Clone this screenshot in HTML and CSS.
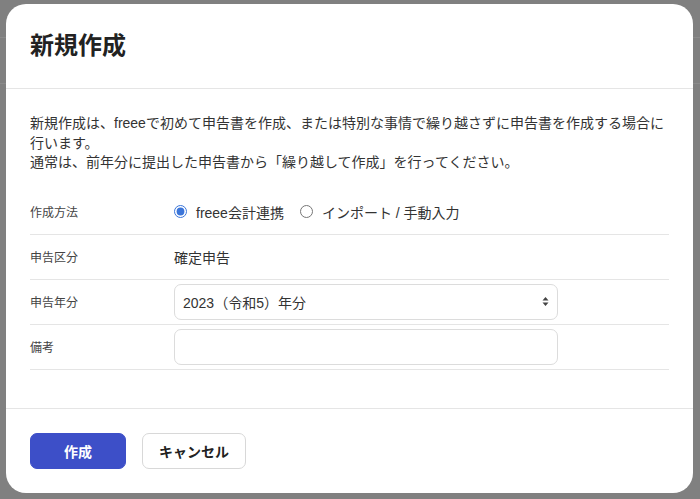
FILE: index.html
```html
<!DOCTYPE html>
<html lang="ja">

<head>
    <meta charset="UTF-8">
    <meta name="viewport" content="width=device-width, initial-scale=1.0">
    <title>新規作成</title>
    <link rel="stylesheet" href="styles.css">
</head>

<body>
    <div class="overlay">
        <div class="modal">
            <div class="modal-header">
                <h1>新規作成</h1>
            </div>
            <div class="modal-body">
                <p class="lead">新規作成は、freeeで初めて申告書を作成、または特別な事情で繰り越さずに申告書を作成する場合に行います。<br>通常は、前年分に提出した申告書から「繰り越して作成」を行ってください。</p>
                <div class="form">
                    <div class="row">
                        <div class="label">作成方法</div>
                        <div class="field radios">
                            <label class="radio"><input type="radio" name="method" checked> freee会計連携</label>
                            <label class="radio"><input type="radio" name="method"> インポート / 手動入力</label>
                        </div>
                    </div>
                    <div class="row">
                        <div class="label">申告区分</div>
                        <div class="field">確定申告</div>
                    </div>
                    <div class="row">
                        <div class="label">申告年分</div>
                        <div class="field">
                            <div class="select">
                                <span>2023（令和5）年分</span>
                                <svg width="7" height="11" viewBox="0 0 7 11"><path d="M3.5 1 L6.5 4.5 H0.5 Z M3.5 10 L6.5 6.5 H0.5 Z" fill="#444"/></svg>
                            </div>
                        </div>
                    </div>
                    <div class="row">
                        <div class="label">備考</div>
                        <div class="field">
                            <input class="input" type="text">
                        </div>
                    </div>
                </div>
            </div>
            <div class="modal-footer">
                <button class="button primary">作成</button>
                <button class="button">キャンセル</button>
            </div>
        </div>
    </div>
</body>

</html>
```

FILE: styles.css
```css
html, body {
    margin: 0;
    padding: 0;
}
body {
    font-family: "Liberation Sans", "Noto Sans CJK JP", sans-serif;
    color: #333;
    background-color: #808080;
    background-image:
        linear-gradient(#8b8b8b, #8b8b8b),
        linear-gradient(#8b8b8b, #8b8b8b);
    background-size: 100% 1px, 100% 1px;
    background-position: 0 37px, 0 83px;
    background-repeat: no-repeat;
    width: 700px;
    height: 499px;
    overflow: hidden;
}
.overlay {
    padding: 4px 7px 6px 6px;
}
.modal {
    background: #fff;
    border-radius: 20px;
    height: 489px;
    display: flex;
    flex-direction: column;
}
.modal-header {
    padding: 28px 24px;
    border-bottom: 1px solid #e5e5e5;
}
.modal-header h1 {
    margin: 0;
    font-size: 24px;
    line-height: 28px;
    font-weight: bold;
    color: #222;
}
.modal-body {
    padding: 25px 24px 38px;
}
.lead {
    margin: 0 0 17px;
    font-size: 14px;
    line-height: 19.5px;
}
.row {
    display: flex;
    align-items: center;
    height: 44px;
    border-bottom: 1px solid #e5e5e5;
}
.label {
    width: 144px;
    font-size: 12px;
    color: #444;
}
.field {
    font-size: 14px;
    color: #333;
}
.radios {
    display: flex;
    gap: 16px;
}
.radio {
    display: flex;
    align-items: center;
    gap: 6px;
}
.radio input {
    margin: 0 3px 0 0;
    width: 13px;
    height: 13px;
    accent-color: #3b75d9;
}
.select {
    width: 366px;
    height: 34px;
    border: 1px solid #dcdcdc;
    border-radius: 7px;
    padding: 0 8px;
    display: flex;
    align-items: center;
    justify-content: space-between;
}
.input {
    display: block;
    box-sizing: border-box;
    width: 384px;
    height: 36px;
    border: 1px solid #dcdcdc;
    border-radius: 7px;
    margin: 0;
}
.modal-footer {
    border-top: 1px solid #e5e5e5;
    padding: 24px;
    display: flex;
    gap: 16px;
}
.button {
    height: 36px;
    min-width: 96px;
    padding: 0 16px;
    font-family: inherit;
    font-size: 14px;
    font-weight: bold;
    color: #222;
    background: #fff;
    border: 1px solid #d8d8d8;
    border-radius: 7px;
}
.button.primary {
    color: #fff;
    background: #3d4fc8;
    border-color: #3d4fc8;
}
```
